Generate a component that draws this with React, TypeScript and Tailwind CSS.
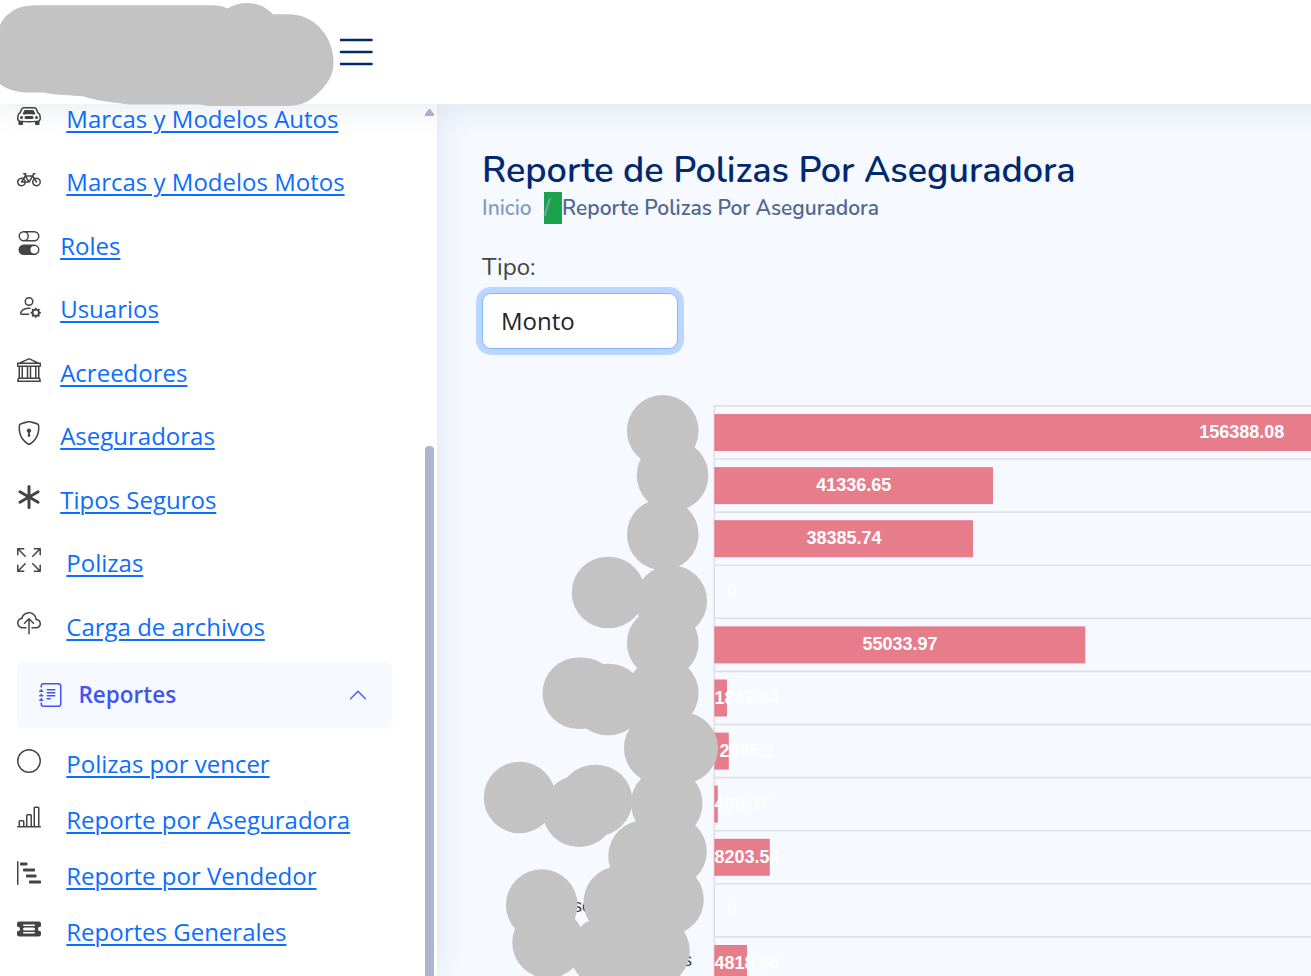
import type { IconType } from "react-icons";
import {
  BsArrowsFullscreen,
  BsAsterisk,
  BsBank,
  BsBarChartLine,
  BsBarChartSteps,
  BsBicycle,
  BsCarFront,
  BsChevronUp,
  BsCircle,
  BsCloudUpload,
  BsJournalText,
  BsPersonGear,
  BsShieldLock,
  BsTicketDetailedFill,
  BsToggles,
} from "react-icons/bs";

type Item = { label: string; icon: IconType; wide?: boolean };

const menu: Item[] = [
  { label: "Marcas y Modelos Autos", icon: BsCarFront, wide: true },
  { label: "Marcas y Modelos Motos", icon: BsBicycle, wide: true },
  { label: "Roles", icon: BsToggles },
  { label: "Usuarios", icon: BsPersonGear },
  { label: "Acreedores", icon: BsBank },
  { label: "Aseguradoras", icon: BsShieldLock },
  { label: "Tipos Seguros", icon: BsAsterisk },
  { label: "Polizas", icon: BsArrowsFullscreen, wide: true },
  { label: "Carga de archivos", icon: BsCloudUpload, wide: true },
];

const reports: Item[] = [
  { label: "Polizas por vencer", icon: BsCircle, wide: true },
  { label: "Reporte por Aseguradora", icon: BsBarChartLine, wide: true },
  { label: "Reporte por Vendedor", icon: BsBarChartSteps, wide: true },
  { label: "Reportes Generales", icon: BsTicketDetailedFill, wide: true },
];

function MenuLink({ item }: { item: Item }) {
  const Icon = item.icon;
  return (
    <a href="#" className="flex items-center">
      <Icon className="mb-[6px] size-6 shrink-0 text-[#444444]" />
      <span
        className={`text-[24px] leading-8 text-[#0d6efd] underline decoration-2 underline-offset-[3px] ${
          item.wide ? "ml-[25.3px]" : "ml-[19.2px]"
        }`}
      >
        {item.label}
      </span>
    </a>
  );
}

const bars = [
  { text: "156388.08", width: 1055, x: 1241.7, y: 438 },
  { text: "41336.65", width: 278.7, x: 853.7, y: 491 },
  { text: "38385.74", width: 258.7, x: 844, y: 544 },
  { text: "0", width: 0, x: 732, y: 597 },
  { text: "55033.97", width: 371, x: 900, y: 650 },
  { text: "1847.64", width: 12.7, x: 747, y: 704 },
  { text: "2095.2", width: 14.5, x: 747, y: 757 },
  { text: "499.37", width: 3.5, x: 742, y: 810 },
  { text: "8203.54", width: 55.5, x: 747, y: 863 },
  { text: "0", width: 0, x: 732, y: 916 },
  { text: "4818.96", width: 32.7, x: 747, y: 969 },
];

const covers = [
  "M662.7 430.8h.1",
  "M672.5 475.5h.1",
  "M662.7 534.5h.1",
  "M607.5 592.5h1.5",
  "M671 601h.3",
  "M662.7 643h.1",
  "M578.3 693.3h4",
  "M607 699.5h2",
  "M662.7 693h.1",
  "M659.7 748h22.5",
  "M666.7 803.5h.1",
  "M519.5 797.5h.1",
  "M594.5 800.5h2",
  "M578.5 811.2h1",
  "M644 856L671 851.5",
  "M541.7 905h.1",
  "M548 942.5h.1",
  "M619.3 902L668 899.5",
  "M606 952L654 951",
];

function Chart() {
  return (
    <svg className="block h-[600px] w-[841px]" viewBox="470 376 841 600">
      <g stroke="#e0e0e0" strokeWidth="1.6">
        {bars.map((_, i) => (
          <line key={i} x1="714" x2="1311" y1={405.9 + i * 53.1} y2={405.9 + i * 53.1} />
        ))}
        <line x1="714.3" x2="714.3" y1="406" y2="976" />
      </g>
      {bars.map((bar, i) => (
        <g key={i}>
          <rect x="714.3" y={414 + i * 53.1} width={bar.width} height="37" fill="#e77d8b" />
          <text
            x={bar.x}
            y={bar.y}
            textAnchor="middle"
            fill="#ffffff"
            className="font-['Liberation_Sans',Arial,sans-serif] text-[18px] font-bold"
          >
            {bar.text}
          </text>
        </g>
      ))}
      <g fill="#373d3f" className="font-['Liberation_Sans',Arial,sans-serif] text-[18px]">
        <text x="573" y="912">sc</text>
        <text x="683" y="966">s</text>
      </g>
      <g stroke="#c3c3c3" strokeWidth="71.6" strokeLinecap="round" fill="none">
        {covers.map((d) => (
          <path key={d} d={d} />
        ))}
      </g>
    </svg>
  );
}

export default function App() {
  return (
    <div className="flex h-[976px] w-[1311px] flex-col overflow-hidden bg-[#f6f9ff] font-['Open_Sans',sans-serif] text-[#444444]">
      <header className="relative z-20 flex h-[104px] w-[1400px] shrink-0 bg-white shadow-[0_3px_32px_rgba(1,41,112,0.1)]">
        <svg className="h-[108px] w-[334px] shrink-0" viewBox="0 0 334 108">
          <path
            fill="#c3c3c3"
            d="M0 25C5 14 17 5.300 34 5.300H212C218 5.300 223 6.500 227.500 8.500C240 1 260 0 273 14.300H290C315 15 333.500 37 333.500 62C333.500 74 329 81 323 88C313 99 304 106 287 106H208L200 104.500H128C112 102 96 101 84 96.500C72 95 57 95.500 44 92.500H28C15 92 6 89 0 84Z"
          />
        </svg>
        <svg className="ml-[5px] mt-[37px] h-[30px] w-[35px]" viewBox="0 0 35 30" stroke="#012970" strokeWidth="2.6" strokeLinecap="round">
          <path d="M2 3H32.5M2 15H32.5M2 27H32.5" />
        </svg>
      </header>

      <div className="flex min-h-0 flex-1">
        <aside className="z-10 flex w-[437px] shrink-0 bg-white shadow-[0_0_32px_rgba(1,41,112,0.1)]">
          <nav className="-mt-[17px] w-[425px] pl-[17px]">
            <ul>
              {menu.map((item) => (
                <li key={item.label} className="flex h-[63.5px] items-center">
                  <MenuLink item={item} />
                </li>
              ))}
            </ul>
            <a
              href="#"
              className="mt-[3.5px] flex h-[66px] w-[375px] items-center rounded-md bg-[#f6f9ff] pl-[22px] pr-6 text-[#4154f1]"
            >
              <BsJournalText className="size-6" />
              <span className="ml-[15.5px] flex-1 text-[22.5px] font-semibold leading-8">Reportes</span>
              <BsChevronUp className="size-5" />
            </a>
            <ul className="mt-[8px]">
              {reports.map((item) => (
                <li key={item.label} className="flex h-14 items-center">
                  <MenuLink item={item} />
                </li>
              ))}
            </ul>
          </nav>
          <div className="flex w-[9px] flex-col">
            <svg className="mt-[5px] h-[7px] w-[9px] shrink-0" viewBox="0 0 9 7" fill="#aab7cf">
              <path d="M4 0H5L9 5V7H0V5Z" />
            </svg>
            <div className="mt-[330px] flex-1 rounded-t bg-[#aab7cf]" />
          </div>
        </aside>

        <main className="flex min-w-0 flex-1 flex-col pl-[45px]">
          <h1 className="mt-[44px] h-[44px] whitespace-nowrap font-[Nunito,'Open_Sans',sans-serif] text-[36px] font-semibold leading-[45px] text-[#012970]">
            Reporte de Polizas Por Aseguradora
          </h1>
          <nav className="flex h-8 whitespace-nowrap font-[Nunito,'Open_Sans',sans-serif] text-[21px] font-semibold leading-[32px] text-[#899bbd]">
            <span className="w-[62px]">Inicio</span>
            <span className="w-[18px] bg-[#19a44b]">/</span>
            <span className="text-[#51678f]">Reporte Polizas Por Aseguradora</span>
          </nav>
          <label className="mt-[27px] h-[36px] font-[Nunito,'Open_Sans',sans-serif] text-[24px] leading-[33px]">Tipo:</label>
          <button className="mt-[6px] h-[56px] w-[196px] shrink-0 rounded-[9px] border border-[#86b7fe] bg-white pl-[18px] text-left text-[24px] text-[#212529] shadow-[0_0_0_6px_#bbd7ff]">
            Monto
          </button>
          <div className="-ml-3 mt-[27px]">
            <Chart />
          </div>
        </main>
      </div>
    </div>
  );
}
